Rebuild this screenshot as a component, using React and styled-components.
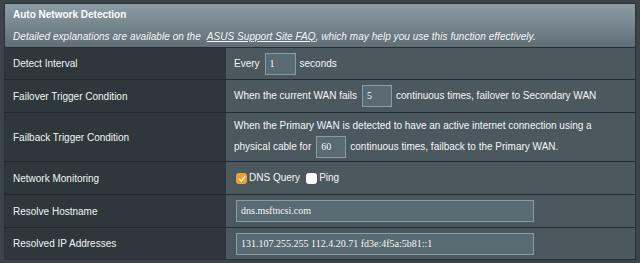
import React from "react";
import styled, { createGlobalStyle } from "styled-components";

const Global = createGlobalStyle`
  html, body { margin: 0; padding: 0; }
  body {
    background: #3b4549;
    font-family: "Liberation Sans", Arial, sans-serif;
    font-size: 10px;
    color: #ffffff;
    width: 640px;
    height: 263px;
    overflow: hidden;
  }
`;

const Page = styled.div`
  padding: 3px 4px 0 4px;
`;

const Panel = styled.div`
  border: 1px solid #2a3337;
  background: #2e383c;
`;

const Header = styled.div`
  background: linear-gradient(#8e9da4, #5f6e75);
  padding: 4px 8px 3px 8px;
  border-bottom: 1px solid #283034;
`;

const Title = styled.div`
  font-weight: bold;
  font-size: 10px;
  line-height: 14px;
`;

const Subtitle = styled.div`
  font-style: italic;
  font-size: 10px;
  line-height: 14px;
  margin-top: 8px;
  color: #f4f6f7;
  letter-spacing: 0.05px;
`;

const Link = styled.span`
  text-decoration: underline;
  margin-left: 6px;
`;

const Row = styled.div`
  display: grid;
  grid-template-columns: 221px 1fr;
  min-height: ${(p) => p.$h || 31}px;
  border-bottom: 1px solid #222a2e;
  &:last-child { border-bottom: none; }
`;

const Label = styled.div`
  background: #2e383c;
  display: flex;
  align-items: center;
  padding-left: 8px;
  font-size: 10px;
  color: #f2f4f5;
`;

const Value = styled.div`
  background: #4b595f;
  display: flex;
  flex-direction: column;
  justify-content: center;
  padding: 0 8px;
  font-size: 10px;
  color: #f4f6f7;
`;

const Line = styled.div`
  line-height: ${(p) => p.$lh || 22}px;
  white-space: nowrap;
  display: flex;
  align-items: center;
`;

const Box = styled.span`
  display: inline-block;
  box-sizing: border-box;
  width: ${(p) => p.$w}px;
  height: 22px;
  margin: 0 4px 0 5px;
  padding-left: 4px;
  border: 1px solid #8c9ba1;
  background: #596a70;
  font-family: "Liberation Serif", "Times New Roman", serif;
  font-size: 10px;
  line-height: 20px;
  color: #f4f6f7;
`;

const WideBox = styled(Box)`
  margin: 0 0 0 2px;
`;

const Check = styled.span`
  display: inline-flex;
  align-items: center;
  justify-content: center;
  box-sizing: border-box;
  width: 11px;
  height: 11px;
  border-radius: 3px;
  margin: 1px 2px 0 2px;
  background: ${(p) => (p.$on ? "#f0a12a" : "#ffffff")};
`;

const CheckText = styled.span`
  margin-right: 4px;
`;

function CheckBox({ on }) {
  return (
    <Check $on={on}>
      {on && (
        <svg width="8" height="8" viewBox="0 0 8 8">
          <path d="M1.3 4.2 L3.2 6.1 L6.8 1.6" fill="none" stroke="#fff" strokeWidth="1.4" strokeLinecap="round" strokeLinejoin="round" />
        </svg>
      )}
    </Check>
  );
}

export default function App() {
  return (
    <>
      <Global />
      <Page>
        <Panel>
          <Header>
            <Title>Auto Network Detection</Title>
            <Subtitle>
              Detailed explanations are available on the<Link>ASUS Support Site FAQ</Link>, which may help you use this function effectively.
            </Subtitle>
          </Header>
          <Row>
            <Label>Detect Interval</Label>
            <Value>
              <Line>Every<Box $w={31}>1</Box>seconds</Line>
            </Value>
          </Row>
          <Row $h={32}>
            <Label>Failover Trigger Condition</Label>
            <Value>
              <Line>When the current WAN fails<Box $w={30}>5</Box>continuous times, failover to Secondary WAN</Line>
            </Value>
          </Row>
          <Row $h={48}>
            <Label>Failback Trigger Condition</Label>
            <Value>
              <Line $lh={20}>When the Primary WAN is detected to have an active internet connection using a</Line>
              <Line>physical cable for<Box $w={30}>60</Box>continuous times, failback to the Primary WAN.</Line>
            </Value>
          </Row>
          <Row $h={32}>
            <Label>Network Monitoring</Label>
            <Value>
              <Line><CheckBox on /><CheckText>DNS Query</CheckText><CheckBox /><span>Ping</span></Line>
            </Value>
          </Row>
          <Row $h={32}>
            <Label>Resolve Hostname</Label>
            <Value>
              <Line><WideBox $w={298}>dns.msftncsi.com</WideBox></Line>
            </Value>
          </Row>
          <Row $h={31}>
            <Label>Resolved IP Addresses</Label>
            <Value>
              <Line><WideBox $w={298}>131.107.255.255 112.4.20.71 fd3e:4f5a:5b81::1</WideBox></Line>
            </Value>
          </Row>
        </Panel>
      </Page>
    </>
  );
}
